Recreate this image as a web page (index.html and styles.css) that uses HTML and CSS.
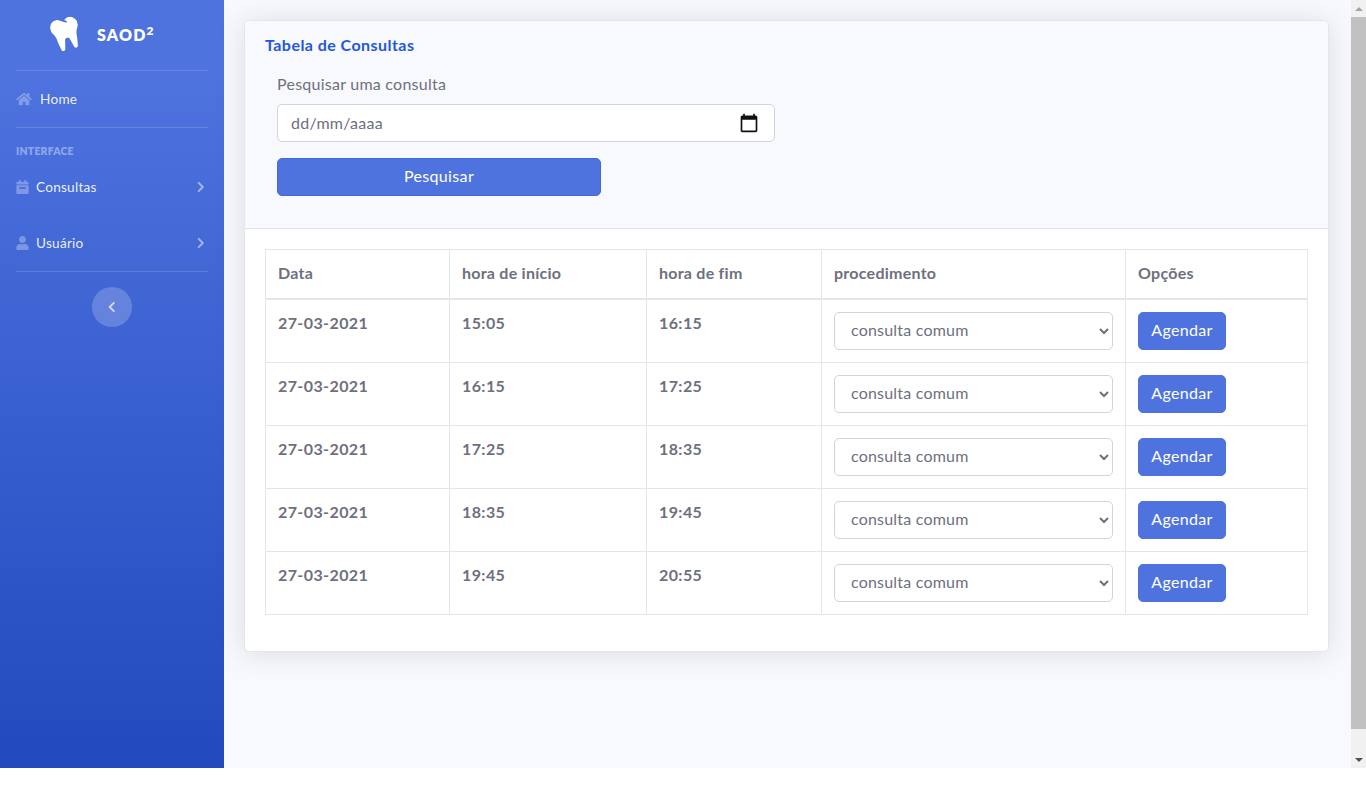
FILE: index.html
```html
<!DOCTYPE html>
<html lang="pt-BR">
<head>
<meta charset="UTF-8">
<meta name="viewport" content="width=device-width, initial-scale=1.0">
<title>SAOD² - Consultas</title>
<link rel="stylesheet" href="styles.css">
</head>
<body>
    <div class="wrapper">
        <aside class="sidebar">
            <a class="brand" href="#">
                <svg class="brand-icon" viewBox="0 0 448 512"><path d="M443.98 96.25c-11.01-45.22-47.11-82.06-92.01-93.72-32.19-8.36-63 5.1-89.14 24.33-3.25 2.39-6.96 3.73-10.5 5.48l28.32 18.21c7.42 4.77 9.58 14.67 4.8 22.11-4.46 6.95-14.27 9.86-22.11 4.8L162.83 12.84c-20.7-10.85-43.38-16.4-66.81-10.31-44.9 11.67-81 48.5-92.01 93.72-10.13 41.62-.42 80.81 21.5 110.43 23.36 31.57 32.68 68.66 36.29 107.35 4.4 47.16 10.33 94.16 20.94 140.32l7.8 33.95c3.19 13.87 15.49 23.7 29.67 23.7 13.97 0 26.15-9.55 29.54-23.16l34.47-138.42c4.56-18.32 20.96-31.16 39.76-31.16s35.2 12.85 39.76 31.16l34.47 138.42c3.39 13.61 15.57 23.16 29.54 23.16 14.18 0 26.48-9.83 29.67-23.7l7.8-33.95c10.61-46.15 16.53-93.16 20.94-140.32 3.61-38.7 12.93-75.78 36.29-107.35 21.95-29.61 31.66-68.8 21.53-110.43z"/></svg>
                <span class="brand-text">SAOD<sup>2</sup></span>
            </a>
            <hr class="divider">
            <a class="nav-link nav-home" href="#">
                <svg class="nav-icon home-icon" viewBox="0 0 576 512"><path d="M280.37 148.26L96 300.11V464a16 16 0 0 0 16 16l112.06-.29a16 16 0 0 0 15.92-16V368a16 16 0 0 1 16-16h64a16 16 0 0 1 16 16v95.64a16 16 0 0 0 16 16.05L464 480a16 16 0 0 0 16-16V300L295.67 148.26a12.19 12.19 0 0 0-15.3 0zM571.6 251.47L488 182.56V44.05a12 12 0 0 0-12-12h-56a12 12 0 0 0-12 12v72.61L318.47 43a48 48 0 0 0-61 0L4.34 251.47a12 12 0 0 0-1.6 16.9l25.5 31A12 12 0 0 0 45.15 301l235.22-193.74a12.19 12.19 0 0 1 15.3 0L530.9 301a12 12 0 0 0 16.9-1.6l25.5-31a12 12 0 0 0-1.7-16.93z"/></svg>
                <span>Home</span>
            </a>
            <hr class="divider">
            <div class="sidebar-heading">Interface</div>
            <a class="nav-link" href="#">
                <svg class="nav-icon" viewBox="0 0 448 512"><path d="M436 160H12c-6.6 0-12-5.4-12-12v-36c0-26.5 21.5-48 48-48h48V12c0-6.6 5.4-12 12-12h40c6.6 0 12 5.4 12 12v52h128V12c0-6.6 5.4-12 12-12h40c6.6 0 12 5.4 12 12v52h48c26.5 0 48 21.5 48 48v36c0 6.6-5.4 12-12 12zM12 192h424c6.6 0 12 5.4 12 12v260c0 26.5-21.5 48-48 48H48c-26.5 0-48-21.5-48-48V204c0-6.6 5.4-12 12-12zm332 124v-40c0-6.6-5.4-12-12-12H116c-6.6 0-12 5.4-12 12v40c0 6.6 5.4 12 12 12h216c6.6 0 12-5.4 12-12z"/></svg>
                <span>Consultas</span>
                <svg class="chevron" viewBox="0 0 320 512"><path d="M285.476 272.971L91.132 467.314c-9.373 9.373-24.569 9.373-33.941 0l-22.667-22.667c-9.357-9.357-9.375-24.522-.04-33.901L188.505 256 34.484 101.255c-9.335-9.379-9.317-24.544.04-33.901l22.667-22.667c9.373-9.373 24.569-9.373 33.941 0L285.475 239.03c9.373 9.372 9.373 24.568.001 33.941z"/></svg>
            </a>
            <a class="nav-link" href="#">
                <svg class="nav-icon" viewBox="0 0 448 512"><path d="M224 256c70.7 0 128-57.3 128-128S294.7 0 224 0 96 57.3 96 128s57.3 128 128 128zm89.6 32h-16.7c-22.2 10.2-46.9 16-72.9 16s-50.6-5.8-72.9-16h-16.7C60.2 288 0 348.2 0 422.4V464c0 26.5 21.5 48 48 48h352c26.5 0 48-21.5 48-48v-41.6c0-74.2-60.2-134.4-134.4-134.4z"/></svg>
                <span>Usuário</span>
                <svg class="chevron" viewBox="0 0 320 512"><path d="M285.476 272.971L91.132 467.314c-9.373 9.373-24.569 9.373-33.941 0l-22.667-22.667c-9.357-9.357-9.375-24.522-.04-33.901L188.505 256 34.484 101.255c-9.335-9.379-9.317-24.544.04-33.901l22.667-22.667c9.373-9.373 24.569-9.373 33.941 0L285.475 239.03c9.373 9.372 9.373 24.568.001 33.941z"/></svg>
            </a>
            <hr class="divider divider-last">
            <button class="sidebar-toggle" type="button" aria-label="Recolher menu">
                <svg viewBox="0 0 320 512"><path d="M34.52 239.03L228.87 44.69c9.37-9.37 24.57-9.37 33.94 0l22.67 22.67c9.36 9.36 9.37 24.52.04 33.9L131.49 256l154.02 154.75c9.34 9.38 9.32 24.54-.04 33.9l-22.67 22.67c-9.37 9.37-24.57 9.37-33.94 0L34.52 272.97c-9.37-9.37-9.37-24.57 0-33.94z"/></svg>
            </button>
        </aside>

        <main class="content">
            <section class="card">
                <div class="card-header">
                    <h6 class="card-title">Tabela de Consultas</h6>
                    <form class="search-form">
                        <label class="search-label" for="search-date">Pesquisar uma consulta</label>
                        <div class="date-field">
                            <input type="text" id="search-date" placeholder="dd/mm/aaaa">
                            <svg viewBox="0 0 24 24"><path d="M20 3h-1V1h-2v2H7V1H5v2H4c-1.1 0-2 .9-2 2v16c0 1.1.9 2 2 2h16c1.1 0 2-.9 2-2V5c0-1.1-.9-2-2-2zm0 18H4V8h16v13z"/></svg>
                        </div>
                        <button class="btn btn-search" type="submit">Pesquisar</button>
                    </form>
                </div>
                <div class="card-body">
                    <table class="table">
                        <thead>
                            <tr>
                                <th class="col-date">Data</th>
                                <th class="col-start">hora de início</th>
                                <th class="col-end">hora de fim</th>
                                <th class="col-proc">procedimento</th>
                                <th>Opções</th>
                            </tr>
                        </thead>
                        <tbody>
                            <tr>
                                <td>27-03-2021</td>
                                <td>15:05</td>
                                <td>16:15</td>
                                <td><select><option>consulta comum</option></select></td>
                                <td><button class="btn" type="button">Agendar</button></td>
                            </tr>
                            <tr>
                                <td>27-03-2021</td>
                                <td>16:15</td>
                                <td>17:25</td>
                                <td><select><option>consulta comum</option></select></td>
                                <td><button class="btn" type="button">Agendar</button></td>
                            </tr>
                            <tr>
                                <td>27-03-2021</td>
                                <td>17:25</td>
                                <td>18:35</td>
                                <td><select><option>consulta comum</option></select></td>
                                <td><button class="btn" type="button">Agendar</button></td>
                            </tr>
                            <tr>
                                <td>27-03-2021</td>
                                <td>18:35</td>
                                <td>19:45</td>
                                <td><select><option>consulta comum</option></select></td>
                                <td><button class="btn" type="button">Agendar</button></td>
                            </tr>
                            <tr>
                                <td>27-03-2021</td>
                                <td>19:45</td>
                                <td>20:55</td>
                                <td><select><option>consulta comum</option></select></td>
                                <td><button class="btn" type="button">Agendar</button></td>
                            </tr>
                        </tbody>
                    </table>
                </div>
            </section>
        </main>

        <div class="scrollbar">
            <span class="arrow arrow-up"></span>
            <span class="thumb"></span>
            <span class="arrow arrow-down"></span>
        </div>
    </div>
</body>
</html>
```

FILE: styles.css
```css
/* Global */
html, body {
    height: 100%;
}

body {
    margin: 0;
    background-color: #fff;
    color: #858796;
    font-family: Lato, "Open Sans", sans-serif;
    font-size: 16px;
    letter-spacing: 0.25px;
    overflow: hidden;
}

.wrapper {
    display: flex;
    height: 768px;
}

/* Sidebar */
.sidebar {
    width: 224px;
    flex-shrink: 0;
    display: flex;
    flex-direction: column;
    background-color: #4e73df;
    background-image: linear-gradient(180deg, #4e73df 10%, #224abe 100%);
}

.brand {
    height: 70px;
    display: flex;
    align-items: center;
    box-sizing: border-box;
    padding: 0 0 2px 52px;
    color: #fff;
    text-decoration: none;
}

.brand-icon {
    width: 28px;
    height: 32px;
    fill: #fff;
    transform: rotate(-15deg);
}

.brand-text {
    margin-left: 17px;
    font-size: 16px;
    font-weight: 800;
    letter-spacing: 1.2px;
}

.brand-text sup {
    font-size: 12px;
    line-height: 0;
}

.divider {
    margin: 0 16px;
    border: 0;
    border-top: 1px solid rgba(255, 255, 255, 0.15);
}

.divider-last {
    margin-bottom: 15px;
}

.nav-link {
    height: 56px;
    display: flex;
    align-items: center;
    box-sizing: border-box;
    padding: 0 16px;
    color: rgba(255, 255, 255, 0.9);
    font-size: 13.6px;
    text-decoration: none;
}

.nav-icon {
    width: 13px;
    height: 14px;
    margin-right: 7px;
    fill: rgba(255, 255, 255, 0.3);
}

.home-icon {
    width: 16px;
    margin-right: 8px;
}

.chevron {
    width: 7.5px;
    height: 12px;
    margin-left: auto;
    margin-right: 3.5px;
    fill: rgba(255, 255, 255, 0.5);
}

.sidebar-heading {
    padding: 17px 16px 0;
    height: 13px;
    margin-bottom: 1px;
    color: rgba(255, 255, 255, 0.4);
    font-size: 10.4px;
    font-weight: 800;
    line-height: 13px;
    text-transform: uppercase;
}

.sidebar-toggle {
    width: 40px;
    height: 40px;
    align-self: center;
    display: flex;
    align-items: center;
    justify-content: center;
    padding: 0;
    border: 0;
    border-radius: 50%;
    background-color: rgba(255, 255, 255, 0.2);
}

.sidebar-toggle svg {
    width: 7.5px;
    height: 12px;
    fill: rgba(255, 255, 255, 0.7);
}

/* Content */
.content {
    flex: 1;
    box-sizing: border-box;
    padding: 20px 22px 0 20px;
    background-color: #f8f9fc;
}

.card {
    background-color: #fff;
    border: 1px solid #e3e6f0;
    border-radius: 5px;
    box-shadow: 0 2px 28px 0 rgba(58, 59, 69, 0.15);
}

.card-header {
    height: 208px;
    box-sizing: border-box;
    padding: 14px 20px 0;
    background-color: #f8f9fc;
    border-bottom: 1px solid #e3e6f0;
    border-radius: 5px 5px 0 0;
}

.card-title {
    margin: 0;
    color: #2456dc;
    font-size: 16px;
    font-weight: 700;
    letter-spacing: 0.45px;
    line-height: 19px;
}

.search-form {
    padding: 0 12px;
    margin-top: 18px;
}

.search-label {
    display: block;
    line-height: 23px;
    margin-bottom: 9px;
    color: #6e707e;
}

.date-field {
    position: relative;
    width: 498px;
    margin-bottom: 16px;
}

.date-field input {
    width: 100%;
    height: 38px;
    box-sizing: border-box;
    padding: 5px 13px 7px;
    background-color: #fff;
    border: 1px solid #d1d3e2;
    border-radius: 5px;
    color: #6e707e;
    font: inherit;
    letter-spacing: 0.25px;
}

.date-field input::placeholder {
    color: #6e707e;
    opacity: 1;
}

.date-field svg {
    position: absolute;
    top: 9px;
    right: 16px;
    width: 20px;
    height: 20px;
    fill: #111;
}

.btn {
    height: 38px;
    box-sizing: border-box;
    padding: 0 12px 2px;
    background-color: #4e73df;
    border: 1px solid #4e73df;
    border-radius: 5px;
    color: #fff;
    font: inherit;
    font-weight: 400;
    letter-spacing: 0.35px;
}

.btn-search {
    display: block;
    width: 324px;
    padding-bottom: 4px;
    border-color: #4269dc;
}

.card-body {
    padding: 20px 20px 36px;
}

/* Table */
.table {
    width: 1043px;
    table-layout: fixed;
    border-collapse: collapse;
    color: #6e707e;
}

.table th,
.table td {
    padding: 12px;
    border: 1px solid #e3e6f0;
    font-weight: 700;
    text-align: left;
    vertical-align: top;
    line-height: 22px;
}

.table th {
    letter-spacing: 0.25px;
}

.table td {
    height: 38px;
    letter-spacing: 0.4px;
}

.table thead th {
    height: 24px;
    border-bottom-width: 2px;
}

.col-date {
    width: 159px;
}

.col-start {
    width: 172px;
}

.col-end {
    width: 150px;
}

.col-proc {
    width: 279px;
}

.table .btn {
    width: 88px;
    display: block;
}

.table select {
    width: 100%;
    height: 38px;
    display: block;
    padding: 4px 12px 8px;
    background-color: #fff;
    border: 1px solid #d1d3e2;
    border-radius: 5px;
    color: #6e707e;
    font: inherit;
    font-weight: 400;
    letter-spacing: 0.2px;
}

/* Fake scrollbar, the window bar is drawn in the picture */
.scrollbar {
    width: 16px;
    flex-shrink: 0;
    display: flex;
    flex-direction: column;
    align-items: center;
    background-color: #f1f1f1;
}

.thumb {
    width: 100%;
    height: 712px;
    margin: 6px 0 auto;
    background-color: #c1c1c1;
}

.arrow {
    width: 0;
    height: 0;
    border-left: 4px solid transparent;
    border-right: 4px solid transparent;
}

.arrow-up {
    margin-top: 7px;
    border-bottom: 4px solid #a3a3a3;
}

.arrow-down {
    margin-bottom: 6px;
    border-top: 4px solid #505050;
}
```
